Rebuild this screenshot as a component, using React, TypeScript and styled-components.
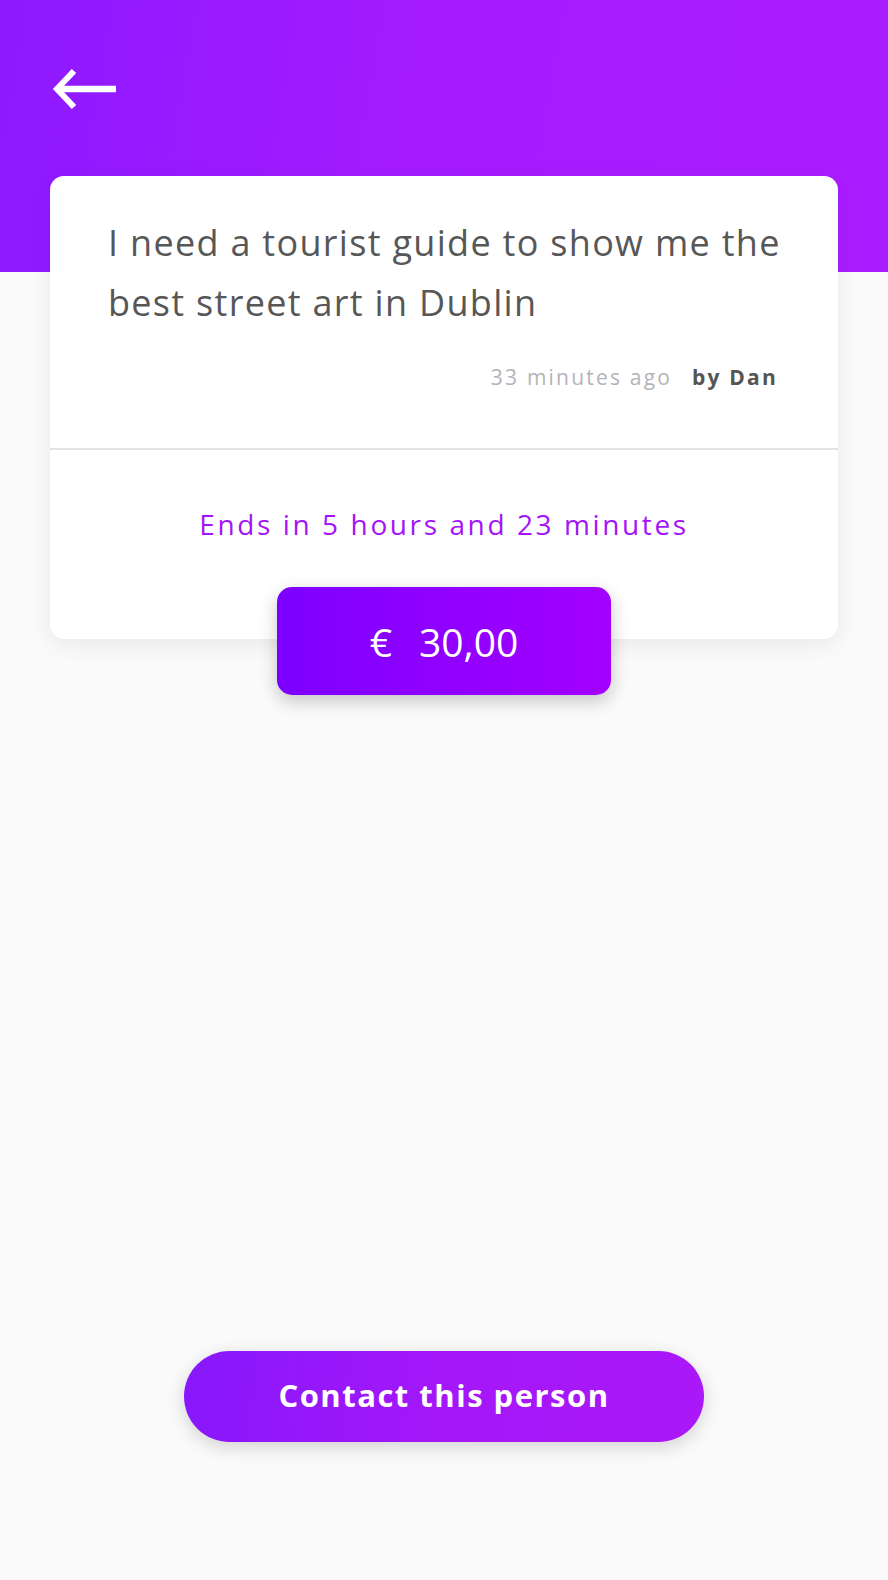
import React from "react";
import styled, { createGlobalStyle } from "styled-components";

const GlobalStyle = createGlobalStyle`
  html, body { margin: 0; padding: 0; }
  body { background: #fafafa; font-family: "Open Sans", "Noto Sans", sans-serif; }
  * { box-sizing: border-box; }
`;

const Page = styled.div`
  min-height: 1580px;
  display: flex;
  flex-direction: column;
  background:
    linear-gradient(100deg, #8d19ff 0%, #a41bff 45%, #aa1cff 100%) top / 100% 272px no-repeat,
    #fafafa;
`;

const TopBar = styled.div`
  height: 176px;
  padding: 68px 0 0 52px;
`;

const BackButton = styled.button`
  border: none;
  background: none;
  padding: 0;
  width: 64px;
  height: 42px;
  cursor: pointer;
  display: block;
`;

const Card = styled.section`
  margin: 0 50px;
  background: #fff;
  border-radius: 14px;
  box-shadow: 0 6px 22px rgba(0, 0, 0, 0.07);
  display: flex;
  flex-direction: column;
`;

const CardTop = styled.div`
  padding: 37px 52px 56px 58px;
  border-bottom: 2px solid #e3e3e3;
`;

const Title = styled.h1`
  margin: 0;
  font-size: 36px;
  line-height: 60px;
  font-weight: 400;
  color: #575757;
  letter-spacing: 1.3px;
`;

const Meta = styled.div`
  margin-top: 29px;
  padding-right: 8px;
  display: flex;
  justify-content: flex-end;
  align-items: baseline;
  gap: 20px;
  font-size: 21px;
  line-height: 30px;
  letter-spacing: 2.2px;
`;

const Ago = styled.span`
  color: #b3b3ba;
`;

const Author = styled.span`
  color: #555;
  font-weight: 700;
`;

const CardBottom = styled.div`
  padding: 54px 20px 0;
  display: flex;
  flex-direction: column;
  align-items: center;
`;

const Ends = styled.p`
  margin: 0;
  font-size: 28px;
  line-height: 40px;
  color: #a414f8;
  letter-spacing: 2.6px;
`;

const PriceButton = styled.button`
  margin-top: 43px;
  margin-bottom: -56px;
  width: 334px;
  height: 108px;
  border: none;
  border-radius: 15px;
  background: linear-gradient(90deg, #7d00ff 0%, #a300ff 100%);
  box-shadow: 0 6px 18px rgba(0, 0, 0, 0.22);
  color: #fff;
  font-family: inherit;
  font-size: 39px;
  font-weight: 500;
  display: flex;
  align-items: center;
  justify-content: center;
  gap: 27px;
  cursor: pointer;
`;

const Footer = styled.div`
  margin-top: auto;
  padding-bottom: 138px;
  display: flex;
  justify-content: center;
`;

const ContactButton = styled.button`
  width: 520px;
  height: 91px;
  border: none;
  border-radius: 46px;
  background: linear-gradient(95deg, #8718fb 0%, #a417f9 50%, #aa18f8 100%);
  box-shadow: 0 5px 18px rgba(0, 0, 0, 0.16);
  color: #fff;
  font-family: inherit;
  font-size: 31px;
  font-weight: 700;
  letter-spacing: 1.5px;
  padding: 0 0 4px;
  cursor: pointer;
`;

const BackIcon = () => (
  <svg width="64" height="42" viewBox="0 0 64 42" fill="none">
    <path d="M8 21 H64" stroke="#fff" strokeWidth="6.5" />
    <path d="M22 3 L5 21 L22 39" stroke="#fff" strokeWidth="6" strokeLinejoin="miter" strokeMiterlimit="10" />
  </svg>
);

export default function App() {
  return (
    <>
      <GlobalStyle />
      <Page>
        <TopBar>
          <BackButton aria-label="Back">
            <BackIcon />
          </BackButton>
        </TopBar>
        <Card>
          <CardTop>
            <Title>I need a tourist guide to show me the best street art in Dublin</Title>
            <Meta>
              <Ago>33 minutes ago</Ago>
              <Author>by Dan</Author>
            </Meta>
          </CardTop>
          <CardBottom>
            <Ends>Ends in 5 hours and 23 minutes</Ends>
            <PriceButton>
              <span>€</span>
              <span>30,00</span>
            </PriceButton>
          </CardBottom>
        </Card>
        <Footer>
          <ContactButton>Contact this person</ContactButton>
        </Footer>
      </Page>
    </>
  );
}
